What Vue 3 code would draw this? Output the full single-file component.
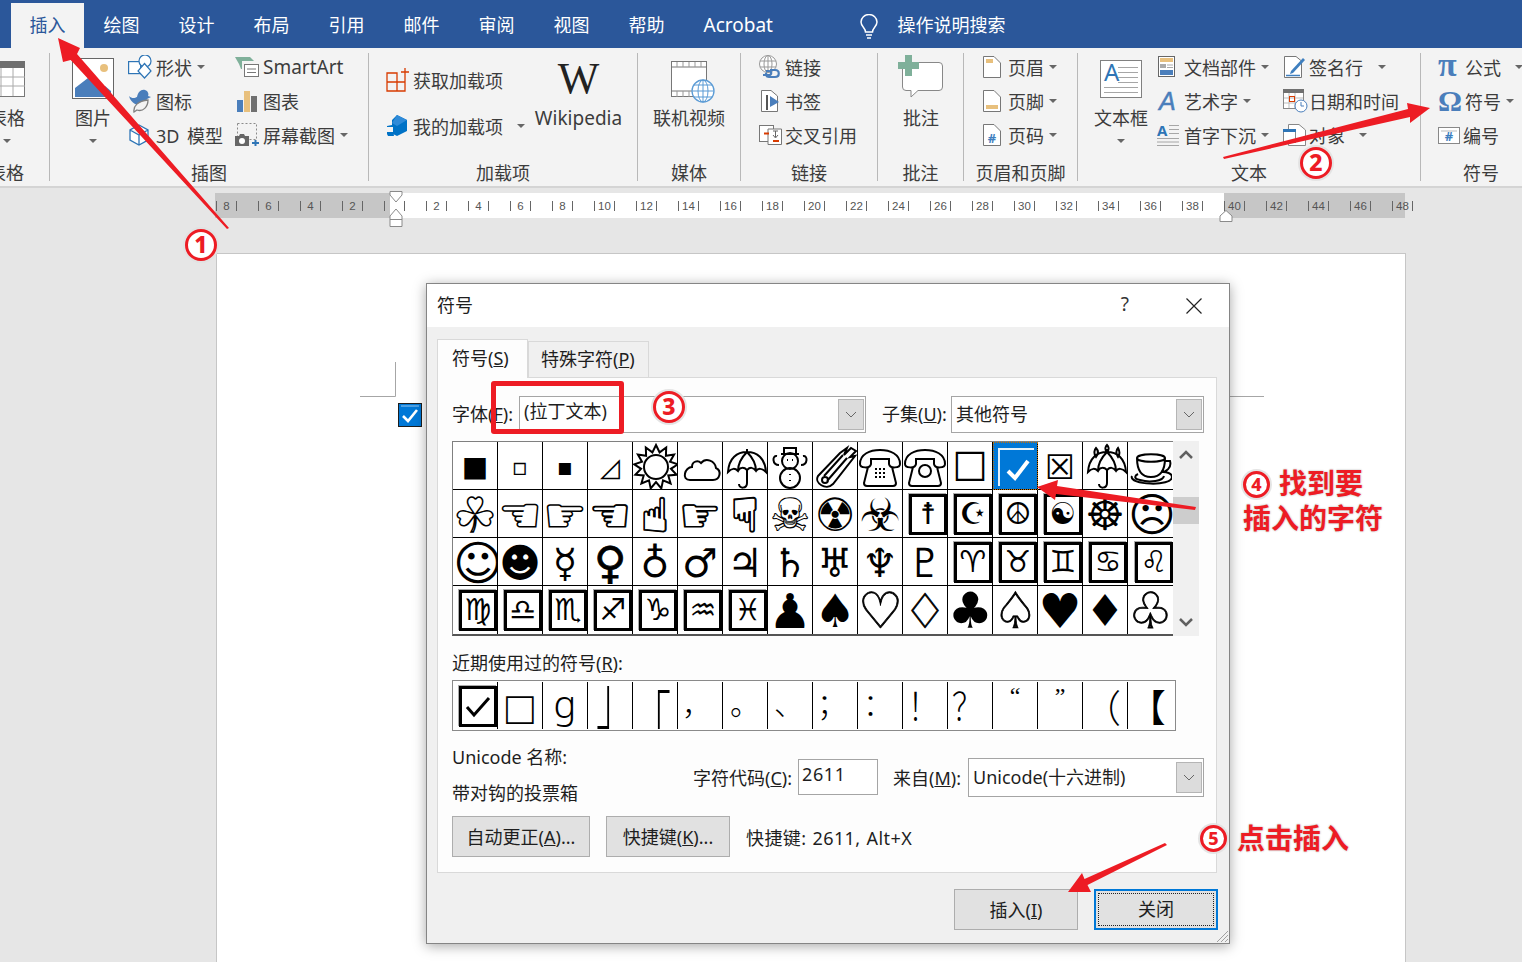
<script setup>
const tabs = ['绘图', '设计', '布局', '引用', '邮件', '审阅', '视图', '帮助', 'Acrobat']

const rulerLabels = ['8', '6', '4', '2', '']
for (let n = 2; n <= 48; n += 2) rulerLabels.push(String(n))

const circle = (cx, cy, r) => `M${cx - r} ${cy} a${r} ${r} 0 1 0 ${r * 2} 0 a${r} ${r} 0 1 0 ${-r * 2} 0 Z `

function star(cx, cy, outer, inner, n) {
  let d = ''
  for (let i = 0; i < n * 2; i++) {
    const r = i % 2 ? inner : outer
    const a = (Math.PI * i) / n
    d += `${i ? 'L' : 'M'}${(cx + r * Math.sin(a)).toFixed(1)} ${(cy - r * Math.cos(a)).toFixed(1)} `
  }
  return d + 'Z '
}

const umbrellaTop = 'M5 29 C6 15 14 9 24 9 C34 9 42 15 43 29 C39 25 35 25 33 28 C30 24 27 24 24 27 C21 24 17 24 15 28 C12 25 9 25 5 29 Z M24 6 V9 M24 27 V40 C24 46 16 46 16 41 M24 9 C18 15 15 21 15 28 M24 9 C30 15 33 21 33 28 '
const handset = 'M2 21 C2 11 12 7 22 7 C32 7 42 11 42 21 C42 25 32 26 31 21 V16 H13 V21 C12 26 2 25 2 21 Z M10 24 L6 40 Q6 43 9 43 H35 Q38 43 38 40 L34 24 '

// pictographs that the fallback font draws too differently from the reference
const pictos = {
  '☼': star(23, 24, 22, 15, 13) + circle(23, 24, 12),
  '☁': 'M12 37 H35 C42 37 44 28 38 25 C37 18 28 14 23 20 C20 17 14 18 14 24 C7 24 3 37 12 37 Z',
  '☂': umbrellaTop,
  '☃': circle(22, 35, 10) + circle(22, 18, 8) + 'M13 11 H31 M16 11 V5 H28 V11 M9 13 C4 12 4 22 11 22 M35 13 C40 12 40 22 33 22 M19 17 H20 M24 17 H25 M22 31 V32 M22 37 V38',
  '☄': 'M5 33 L27 10 L34 5 L31 12 L38 5 L43 8 L37 14 L42 13 L20 41 C13 48 1 40 5 33 Z M11 33 L30 12 M14 38 L34 15 ' + circle(12, 37, 3),
  '☎': handset + 'M17 26 H19 M21 26 H23 M25 26 H27 M17 30 H19 M21 30 H23 M25 30 H27 M17 34 H19 M21 34 H23 M25 34 H27',
  '☏': handset + circle(22, 28, 6),
  '☔': umbrellaTop + 'M13 14 C10 10 12 6 13 5 C15 7 16 10 13 14 Z M24 9 C21 6 23 3 24 2 C25 3 27 6 24 9 Z M35 14 C32 10 34 6 35 5 C36 7 38 10 35 14 Z',
  '☕': 'M9 15 C9 10 37 10 37 15 C37 20 9 20 9 15 Z M9 15 C9 28 14 34 23 34 C32 34 37 28 37 15 M37 18 H42 C44 25 38 29 33 29 M4 33 C0 42 44 44 44 34 C44 30 38 29 35 29 M10 31 C6 33 6 36 12 37 C22 40 35 38 36 33',
}

const boxed = new Set('☨☪☮☯♈♉♊♋♌♍♎♏♐♑♒♓')
const symbols = [...'■▫▪◿☼☁☂☃☄☎☏☐☑☒☔☕☘☚☛☜☝☞☟☠☢☣☨☪☮☯☸☹☺☻☿♀♁♂♃♄♅♆♇♈♉♊♋♌♍♎♏♐♑♒♓♟♠♡♢♣♤♥♦♧']
const sizeClass = {
  '■': 's28', '▫': 's24', '▪': 's24', '◿': 's26', '☒': 's34',
  '☘': 's48 line', '☚': 's48 line', '☛': 's48 line', '☜': 's48 thick', '☝': 's48 thick', '☞': 's48 thick', '☟': 's48 thick',
  '☠': 's46', '☢': 's46', '☣': 's46', '☸': 's44', '☹': 's46', '☺': 's48',
  '♀': 's44 thick', '♟': 's48', '♠': 's46', '♡': 's50 thick', '♢': 's48 thick', '♣': 's50',
  '♤': 's50 thick', '♥': 's48', '♦': 's44', '♧': 's50 thick',
}

const recent = [
  ['□', 'square'], ['g', 'latin'], ['」', 'tall left'], ['「', 'tall right'],
  ['，', 'punct p4'], ['。', 'punct p7'], ['、', 'punct p6'], ['；', 'punct p4'], ['：', 'punct p5'],
  ['！', 'punct p5 tall-p'], ['？', 'punct p4 tall-p'], ['“', 'quote'], ['”', 'quote'], ['（', ''], ['【', ''],
]
</script>

<template>
  <div class="app">
    <div class="tabbar">
      <div class="tab active">插入</div>
      <div v-for="t in tabs" :key="t" class="tab" :class="{ wide: t === 'Acrobat' }">{{ t }}</div>
      <svg class="bulb" width="20" height="26" viewBox="0 0 20 26" fill="none" stroke="#fff" stroke-width="1.5">
        <path d="M6.5 18 C6.5 14 2 12.5 2 8 A8 7.500 0 0 1 18 8 C18 12.500 13.500 14 13.500 18 Z" />
        <path d="M7 21 H13 M8 24 H12" />
      </svg>
      <div class="search">操作说明搜索</div>
    </div>

    <div class="ribbon">
      <section class="group g1">
        <div class="body">
          <div class="big table-btn">
            <div class="art">
              <svg width="36" height="54" viewBox="0 0 36 54">
                <rect x="0.500" y="11.500" width="35" height="35" fill="#fff" stroke="#777" />
                <rect x="0" y="11" width="36" height="7" fill="#6e6e6e" />
                <path d="M12 18 V46 M24 18 V46 M0 27 H36 M0 36 H36" stroke="#aaa" />
              </svg>
            </div>
            <span>表格</span>
            <i class="caret drop"></i>
          </div>
        </div>
        <div class="label table-label">表格</div>
      </section>

      <section class="group g2">
        <div class="body">
          <div class="big pic-btn">
            <div class="art">
              <svg width="42" height="54" viewBox="0 0 42 54">
                <rect x="0.500" y="8.500" width="41" height="40" fill="#fff" stroke="#666" />
                <circle cx="32" cy="18" r="4" fill="#e8c07d" />
                <path d="M3 47 V38 L16 28 L29 38 L33 36 L39 41 V47 Z" fill="#4a7ebb" />
              </svg>
            </div>
            <span>图片</span>
            <i class="caret drop"></i>
          </div>
          <div class="rows col-shape">
            <div class="row">
              <svg class="ico" width="24" height="24" viewBox="0 0 24 24" fill="#fff" stroke="#2e75b6" stroke-width="1.200">
                <rect x="0.600" y="6.600" width="12" height="12" />
                <circle cx="17" cy="6" r="6" />
                <path d="M16.500 8.500 L23 16 L16.500 23 L10 16 Z" />
              </svg>
              <span class="txt">形状</span><i class="caret"></i>
            </div>
            <div class="row">
              <svg class="ico" width="24" height="24" viewBox="0 0 24 24">
                <path d="M1 7 C4 10 7 9 9 8 C10 3 13 0 17 1 C20 2 21 5 20 7 L23 8 L19 10 C17 16 11 17 7 15 C4 13 2 11 1 7 Z" fill="#4a7ebb" />
                <path d="M6 23 C5 17 10 12 20 11 C20 18 15 23 9 21 Z" fill="#f3f3f3" stroke="#808080" stroke-width="1.300" />
              </svg>
              <span class="txt">图标</span>
            </div>
            <div class="row">
              <svg class="ico" width="24" height="24" viewBox="0 0 24 24" fill="#fff" stroke="#2e75b6" stroke-width="1.300">
                <path d="M11 2 L20 7 V17 L11 22 L2 17 V7 Z M2 7 L11 12 L20 7 M11 12 V22" />
              </svg>
              <span class="txt spaced">3D 模型</span>
            </div>
          </div>
          <div class="rows">
            <div class="row">
              <svg class="ico ico-28" width="24" height="24" viewBox="0 0 24 24">
                <path d="M0 2 H15 L19 6 H7 V14 H6 L4 9 Z" fill="#7fb09a" />
                <rect x="9.500" y="9.500" width="14" height="12" fill="#fff" stroke="#777" />
                <path d="M12 14 H21 M12 17.500 H21" stroke="#777" />
              </svg>
              <span class="txt wide">SmartArt</span>
            </div>
            <div class="row">
              <svg class="ico ico-28" width="24" height="24" viewBox="0 0 24 24">
                <rect x="2" y="11" width="6" height="12" fill="#4a7ebb" />
                <rect x="9" y="2" width="6" height="21" fill="#e8c07d" />
                <rect x="16" y="7" width="6" height="16" fill="#707070" />
              </svg>
              <span class="txt">图表</span>
            </div>
            <div class="row">
              <svg class="ico ico-28" width="24" height="24" viewBox="0 0 24 24">
                <rect x="2.500" y="0.500" width="19" height="16" fill="none" stroke="#8a8a8a" stroke-dasharray="2 2" />
                <path d="M0 13 H4 L5 11 H9 L10 13 H14 V23 H0 Z" fill="#666" />
                <circle cx="7" cy="18" r="3" fill="#fff" />
                <path d="M17 20 H24 M20.500 17 V23" stroke="#2e75b6" stroke-width="2" />
              </svg>
              <span class="txt">屏幕截图</span><i class="caret"></i>
            </div>
          </div>
        </div>
        <div class="label">插图</div>
      </section>

      <section class="group g3">
        <div class="body">
          <div class="addins">
            <div class="row row-tall">
              <svg class="ico" width="24" height="24" viewBox="0 0 24 24" fill="none" stroke="#d83b01" stroke-width="1.300">
                <path d="M1 5 H11 V23 H1 Z M1 14 H19 V23 H11 M19 14 V8 M15 4 H23 M19 0 V8" />
              </svg>
              <span class="txt">获取加载项</span>
            </div>
            <div class="row row-tall">
              <svg class="ico" width="24" height="24" viewBox="0 0 24 24">
                <path d="M11 1 L21 6 V17 L11 22 L7 20 V13 H1 V18 H7 L8 22 H2 L1 20 V12 L6 11 V6 Z" fill="#0072c6" />
                <path d="M6 9 L11 12 L21 6 L11 1 Z" fill="#2e8ad8" />
              </svg>
              <span class="txt">我的加载项</span><i class="caret caret-far"></i>
            </div>
          </div>
          <div class="big wiki-btn">
            <div class="art"><span class="wiki-w">W</span></div>
            <span class="wide">Wikipedia</span>
          </div>
        </div>
        <div class="label">加载项</div>
      </section>

      <section class="group g4">
        <div class="body">
          <div class="big media-btn">
            <div class="art">
              <svg width="72" height="54" viewBox="0 0 72 54">
                <rect x="18.500" y="11.500" width="35" height="35" fill="#fff" stroke="#777" />
                <path d="M18 17 H54 M18 41 H40" stroke="#777" />
                <path d="M24 12 V17 M30 12 V17 M36 12 V17 M42 12 V17 M48 12 V17 M24 41 V47 M30 41 V47 M36 41 V47" stroke="#999" />
                <circle cx="50" cy="41" r="11" fill="#fff" stroke="#5b9bd5" stroke-width="1.300" />
                <ellipse cx="50" cy="41" rx="5" ry="11" fill="none" stroke="#5b9bd5" />
                <path d="M39 41 H61 M41 35 H59 M41 47 H59 M50 30 V52" stroke="#5b9bd5" />
              </svg>
            </div>
            <span>联机视频</span>
          </div>
        </div>
        <div class="label">媒体</div>
      </section>

      <section class="group g5">
        <div class="body">
          <div class="rows col-links">
            <div class="row">
              <svg class="ico" width="24" height="24" viewBox="0 0 24 24" fill="none">
                <circle cx="10" cy="9" r="8.500" stroke="#999" fill="#fff" />
                <ellipse cx="10" cy="9" rx="4" ry="8.500" stroke="#999" />
                <path d="M2 6 H18 M2 12 H18 M10 1 V17" stroke="#999" />
                <path d="M5 20 H11 C14 20 14 16 11 16 H8 M17 15 H12 M17 15 C22 15 22 22 17 22 H11 C8 22 7 19 9 18" stroke="#4a7ebb" stroke-width="2.200" />
              </svg>
              <span class="txt">链接</span>
            </div>
            <div class="row">
              <svg class="ico" width="24" height="24" viewBox="0 0 24 24" fill="#fff">
                <path d="M3.500 1.500 H13 L19.500 7 V22.500 H3.500 Z" stroke="#777" />
                <path d="M9 6 V21" stroke="#555" stroke-width="2" />
                <path d="M12 7 L21 13 L12 18 Z" fill="#4a7ebb" />
              </svg>
              <span class="txt">书签</span>
            </div>
            <div class="row">
              <svg class="ico" width="24" height="24" viewBox="0 0 24 24" fill="#fff" stroke="#777">
                <rect x="1.500" y="2.500" width="14" height="16" />
                <path d="M10 6 H23.500 V21.500 H10 Z" />
                <path d="M6 10.500 H11" stroke="#d83b01" stroke-width="2" />
                <path d="M15 8 H20 M17.500 8 V14 M15 12 L17.500 15 L20 12" stroke="#666" fill="none" />
                <path d="M15 18 H21" stroke="#d83b01" stroke-width="2" />
              </svg>
              <span class="txt">交叉引用</span>
            </div>
          </div>
        </div>
        <div class="label">链接</div>
      </section>

      <section class="group g6">
        <div class="body">
          <div class="big note-btn">
            <div class="art">
              <svg width="46" height="54" viewBox="0 0 46 54">
                <path d="M8 12.500 H41 Q44.500 12.500 44.500 16 V37 Q44.500 40.500 41 40.500 H20 L13 47 V40.500 H8 Q4.500 40.500 4.500 37 V16 Q4.500 12.500 8 12.500 Z" fill="#fff" stroke="#888" />
                <path d="M7 5 H14 V12 H21 V19 H14 V26 H7 V19 H0 V12 H7 Z" fill="#7fb09a" />
              </svg>
            </div>
            <span>批注</span>
          </div>
        </div>
        <div class="label">批注</div>
      </section>

      <section class="group g7">
        <div class="body">
          <div class="rows col-page">
            <div class="row">
              <svg class="ico" width="18" height="24" viewBox="0 0 18 24" fill="#fff">
                <path d="M0.500 1.500 H11 L17.500 8 V22.500 H0.500 Z" stroke="#777" />
                <rect x="3" y="4" width="7" height="4" fill="#e8c07d" />
              </svg>
              <span class="txt">页眉</span><i class="caret"></i>
            </div>
            <div class="row">
              <svg class="ico" width="18" height="24" viewBox="0 0 18 24" fill="#fff">
                <path d="M0.500 1.500 H11 L17.500 8 V22.500 H0.500 Z" stroke="#777" />
                <rect x="3" y="16" width="12" height="4" fill="#e8c07d" />
              </svg>
              <span class="txt">页脚</span><i class="caret"></i>
            </div>
            <div class="row">
              <svg class="ico" width="18" height="24" viewBox="0 0 18 24" fill="#fff">
                <path d="M0.500 1.500 H11 L17.500 8 V22.500 H0.500 Z" stroke="#777" />
                <text x="9" y="20" text-anchor="middle" class="svg-num">#</text>
              </svg>
              <span class="txt">页码</span><i class="caret"></i>
            </div>
          </div>
        </div>
        <div class="label">页眉和页脚</div>
      </section>

      <section class="group g8">
        <div class="body">
          <div class="big box-btn">
            <div class="art">
              <svg width="54" height="54" viewBox="0 0 54 54">
                <rect x="6.500" y="10.500" width="41" height="37" fill="#fff" stroke="#808080" />
                <text x="10" y="31" class="svg-a">A</text>
                <path d="M24 17.500 H44 M24 22.500 H44 M24 27.500 H44 M24 32.500 H44 M10 37.500 H44 M10 42.500 H44" stroke="#a6a6a6" />
              </svg>
            </div>
            <span>文本框</span>
            <i class="caret drop"></i>
          </div>
          <div class="rows col-parts">
            <div class="row">
              <svg class="ico" width="21" height="24" viewBox="0 0 21 24" fill="#fff">
                <rect x="1.500" y="1.500" width="16" height="20" stroke="#666" />
                <rect x="3" y="3" width="13" height="4" fill="#e8c07d" />
                <rect x="3" y="9" width="6" height="4" fill="#aaa" />
                <path d="M10 10 H16 M10 12.500 H16" stroke="#aaa" />
                <rect x="3" y="15" width="13" height="5" fill="#4a7ebb" />
              </svg>
              <span class="txt">文档部件</span><i class="caret"></i>
            </div>
            <div class="row">
              <svg class="ico" width="21" height="24" viewBox="0 0 21 24">
                <text x="2" y="21" class="svg-art">A</text>
              </svg>
              <span class="txt">艺术字</span><i class="caret"></i>
            </div>
            <div class="row">
              <svg class="ico drop-ico" width="23" height="24" viewBox="0 0 23 24">
                <text x="0" y="13" class="svg-drop">A</text>
                <path d="M12 2.500 H22 M12 6.500 H22 M12 10.500 H22 M0 15.500 H22 M0 19 H22 M0 22.500 H22" stroke="#a6a6a6" />
              </svg>
              <span class="txt">首字下沉</span><i class="caret"></i>
            </div>
          </div>
          <div class="rows">
            <div class="row">
              <svg class="ico" width="23" height="24" viewBox="0 0 23 24" fill="#fff">
                <path d="M1.500 1.500 H13 L18.500 6 V22.500 H1.500 Z" stroke="#777" />
                <path d="M8 16 L20 3 L22 5 L10 18 L7 19 Z" fill="#3f7fbf" />
                <path d="M3 20.500 H17" stroke="#3f7fbf" stroke-width="1.500" />
              </svg>
              <span class="txt">签名行</span><i class="caret caret-sign"></i>
            </div>
            <div class="row">
              <svg class="ico" width="25" height="24" viewBox="0 0 25 24" fill="#fff">
                <rect x="0.500" y="1.500" width="20" height="18" stroke="#888" />
                <rect x="0" y="0" width="21" height="4" fill="#707070" />
                <path d="M6 4 V19 M12 4 V19 M1 9 H20 M1 14 H20" stroke="#bbb" />
                <rect x="6.500" y="7.500" width="5" height="5" stroke="#d83b01" fill="none" />
                <circle cx="18" cy="17" r="6" stroke="#4a7ebb" />
                <path d="M18 13 V17 H21" stroke="#4a7ebb" fill="none" />
              </svg>
              <span class="txt txt-date">日期和时间</span>
            </div>
            <div class="row">
              <svg class="ico" width="23" height="24" viewBox="0 0 23 24" fill="#fff">
                <path d="M5.500 1.500 H16 L22.500 7 V22.500 H5.500 Z" stroke="#888" />
                <rect x="0.500" y="6.500" width="12" height="13" stroke="#888" />
                <rect x="0" y="6" width="13" height="3" fill="#2e75b6" />
              </svg>
              <span class="txt">对象</span><i class="caret caret-obj"></i>
            </div>
          </div>
        </div>
        <div class="label">文本</div>
      </section>

      <section class="group g9">
        <div class="body">
          <div class="rows col-sym">
            <div class="row">
              <span class="sym-ico pi">π</span>
              <span class="txt">公式</span><i class="caret caret-obj"></i>
            </div>
            <div class="row">
              <span class="sym-ico omega">Ω</span>
              <span class="txt">符号</span><i class="caret"></i>
            </div>
            <div class="row">
              <svg class="ico" width="22" height="24" viewBox="0 0 22 24" fill="#fff">
                <rect x="0.500" y="4.500" width="21" height="16" stroke="#888" />
                <path d="M3 8 H19" stroke="#bbb" />
                <text x="11" y="18" text-anchor="middle" class="svg-num">#</text>
              </svg>
              <span class="txt">编号</span>
            </div>
          </div>
        </div>
        <div class="label sym-label">符号</div>
      </section>
    </div>

    <main class="workspace">
      <div class="ruler">
        <div v-for="(r, i) in rulerLabels" :key="i" class="rcell"><span>{{ r }}</span></div>
        <svg class="indent indent-left" width="14" height="36" viewBox="0 0 14 36" fill="#fff" stroke="#8a8a8a">
          <path d="M1 0.500 H13 V4 L7 11 L1 4 Z" />
          <path d="M7 18 L13 25 V35.500 H1 V25 Z M1 28.500 H13" />
        </svg>
        <svg class="indent indent-right" width="14" height="12" viewBox="0 0 14 12" fill="#fff" stroke="#8a8a8a">
          <path d="M7 0.500 L13 6 V11.500 H1 V6 Z" />
        </svg>
      </div>
      <div class="page">
        <div class="page-marks">
          <svg width="36" height="35" viewBox="0 0 36 35" fill="none" stroke="#a6a6a6"><path d="M35.500 0 V34.500 H0" /></svg>
          <svg class="picked" width="24" height="24" viewBox="0 0 24 24">
            <rect x="0.500" y="0.500" width="23" height="23" fill="#0078d7" stroke="#1d1d1d" />
            <path d="M3 3 H21" stroke="#fff" opacity=".6" />
            <path d="M5 13 L10 18 L19 7" fill="none" stroke="#fff" stroke-width="2.600" />
          </svg>
          <svg class="mark-right" width="41" height="35" viewBox="0 0 41 35" fill="none" stroke="#a6a6a6"><path d="M41 34.500 H0" /></svg>
        </div>
      </div>
    </main>

    <div class="dialog">
      <header class="dlg-title">
        <span class="dlg-name">符号</span>
        <span class="help">?</span>
        <svg width="16" height="16" viewBox="0 0 16 16" stroke="#222" stroke-width="1.200"><path d="M0.500 0.500 L15.500 15.500 M15.500 0.500 L0.500 15.500" /></svg>
      </header>
      <div class="dlg-body">
        <div class="dtabs">
          <div class="dtab on">符号(<u>S</u>)</div>
          <div class="dtab">特殊字符(<u>P</u>)</div>
        </div>
        <div class="panel">
          <div class="pick-row">
            <label class="l-font">字体(<u>F</u>):</label>
            <div class="select s-font"><span>(拉丁文本)</span><b class="chev"><svg width="12" height="7" viewBox="0 0 12 7" fill="none" stroke="#666"><path d="M1 1 L6 6 L11 1" /></svg></b></div>
            <label class="l-sub">子集(<u>U</u>):</label>
            <div class="select s-sub"><span>其他符号</span><b class="chev"><svg width="12" height="7" viewBox="0 0 12 7" fill="none" stroke="#666"><path d="M1 1 L6 6 L11 1" /></svg></b></div>
          </div>

          <div class="map-wrap">
            <div class="charmap">
              <div v-for="(s, i) in symbols" :key="i" class="cell" :class="[{ sel: i === 12 }, sizeClass[s]]">
                <svg v-if="i === 12" width="39" height="41" viewBox="0 0 39 41">
                  <path d="M2 39 V2 H37" fill="none" stroke="#fff" stroke-width="2" opacity=".9" />
                  <path d="M11 24 L18 31 L31 14" fill="none" stroke="#fff" stroke-width="4" />
                </svg>
                <svg v-else-if="pictos[s]" class="picto" width="44" height="47" viewBox="0 0 44 47" fill="none" stroke="#000" stroke-width="2">
                  <path :d="pictos[s]" />
                </svg>
                <span v-else-if="boxed.has(s)" class="box">{{ s }}</span>
                <template v-else>{{ s }}</template>
              </div>
            </div>
            <div class="vbar">
              <svg width="14" height="9" viewBox="0 0 14 9" fill="none" stroke="#606060" stroke-width="2.500"><path d="M1 8 L7 2 L13 8" /></svg>
              <div class="thumb"></div>
              <svg width="14" height="9" viewBox="0 0 14 9" fill="none" stroke="#606060" stroke-width="2.500"><path d="M1 1 L7 7 L13 1" /></svg>
            </div>
          </div>

          <div class="recent-label">近期使用过的符号(<u>R</u>):</div>
          <div class="recent">
            <div class="rc">
              <span class="box box-check"><svg width="26" height="22" viewBox="0 0 26 22" fill="none" stroke="#000" stroke-width="3"><path d="M2 11 L9 19 L24 2" /></svg></span>
            </div>
            <div v-for="(r, i) in recent" :key="i" class="rc" :class="r[1]"><span class="rc-g">{{ r[0] }}</span></div>
          </div>

          <div class="info">
            <div class="info-left">
              <div>Unicode 名称:</div>
              <div>带对钩的投票箱</div>
            </div>
            <div class="info-right">
              <label class="l-code">字符代码(<u>C</u>):</label>
              <div class="input">2611</div>
              <label class="l-from">来自(<u>M</u>):</label>
              <div class="select s-from"><span>Unicode(十六进制)</span><b class="chev"><svg width="12" height="7" viewBox="0 0 12 7" fill="none" stroke="#666"><path d="M1 1 L6 6 L11 1" /></svg></b></div>
            </div>
          </div>

          <div class="keys">
            <button class="btn b-auto">自动更正(<u>A</u>)...</button>
            <button class="btn b-key">快捷键(<u>K</u>)...</button>
            <span class="shortcut">快捷键: 2611, Alt+X</span>
          </div>
        </div>
        <div class="foot">
          <button class="btn b-foot">插入(<u>I</u>)</button>
          <button class="btn b-foot b-close"><span>关闭</span></button>
        </div>
      </div>
      <svg class="grip" width="14" height="14" viewBox="0 0 14 14" stroke="#a0a0a0"><path d="M13 2 L2 13 M13 6 L6 13 M13 10 L10 13" /></svg>
    </div>

    <svg class="arrows" width="1522" height="962" viewBox="0 0 1522 962" fill="#ed1c24">
      <polygon points="58,38 80,48 77,54 229,228 227,229 70.700,60 63,62" />
      <polygon points="1430,108 1407,103 1408,109 1223,157 1224,159 1410,117 1410,123" />
      <polygon points="1037,487 1058,480 1057,486 1196,507 1195,510 1056,494 1055,500" />
      <polygon points="1068,892 1082,873 1084.500,879 1165,843 1167,845 1087.500,885 1091,892" />
    </svg>
    <div class="redbox"></div>
    <div class="num n1">1</div>
    <div class="num n2">2</div>
    <div class="num n3">3</div>
    <div class="num small n4">4</div>
    <div class="num small n5">5</div>
    <div class="note note4">找到要</div>
    <div class="note note4b">插入的字符</div>
    <div class="note note5">点击插入</div>
  </div>
</template>

<style>
html, body { margin: 0; background: #e6e6e6; overflow: hidden; }
</style>

<style scoped>
.app {
  position: relative;
  width: 1522px;
  height: 962px;
  overflow: hidden;
  background: #e6e6e6;
  font-family: "Noto Sans", "Noto Sans CJK SC", sans-serif;
  font-size: 18px;
  color: #3c3c3c;
}
.wide { font-size: 19px; }

/* tabs */
.tabbar {
  height: 48px;
  box-sizing: border-box;
  padding-left: 11px;
  background: #2b579a;
  display: flex;
  align-items: flex-end;
  color: #fff;
}
.tab {
  height: 45px;
  line-height: 45px;
  padding: 0 19.5px;
  white-space: nowrap;
}
.tab.active {
  padding: 0 18.5px;
  background: #f3f3f3;
  color: #2b579a;
}
.bulb { margin: 0 18px 8px 67px; flex: none; }
.search { height: 45px; line-height: 45px; }

/* ribbon */
.ribbon {
  height: 140px;
  box-sizing: border-box;
  background: #f3f3f3;
  border-bottom: 2px solid #d4d4d4;
  display: flex;
}
.group {
  box-sizing: border-box;
  height: 128px;
  margin-top: 5px;
  border-right: 1px solid #b8b8b8;
  flex: none;
}
.g1 { width: 50px; overflow: hidden; }
.g2 { width: 319px; }
.g3 { width: 269px; }
.g4 { width: 103px; }
.g5 { width: 137px; }
.g6 { width: 86px; }
.g7 { width: 114px; }
.g8 { width: 343px; }
.g9 { width: 102px; border-right: 0; }
.body {
  height: 111px;
  margin-top: -3px;
  display: flex;
  position: relative;
}
.label {
  height: 24px;
  line-height: 24px;
  text-align: center;
  white-space: nowrap;
}
.table-label { margin-left: -37px; }
.sym-label { padding-left: 18px; }
.big {
  display: flex;
  flex-direction: column;
  align-items: center;
  flex: none;
  white-space: nowrap;
}
.big > span { height: 26px; line-height: 26px; }
.art {
  height: 55px;
  display: flex;
  justify-content: center;
  align-self: center;
}
.caret {
  display: inline-block;
  width: 0;
  height: 0;
  margin-left: 5px;
  border: 4px solid transparent;
  border-top: 4px solid #666;
  border-bottom: 0;
  flex: none;
}
.caret.drop { margin: 8px 0 0; }
.caret-far { margin-left: 14px; }
.caret-sign { margin-left: 15px; }
.caret-obj { margin-left: 14px; }
.rows { display: flex; flex-direction: column; flex: none; }
.row {
  height: 34px;
  display: flex;
  align-items: center;
  white-space: nowrap;
}
.row-tall { height: 46px; }
.ico { flex: none; margin-right: 3px; }
.ico-28 { margin-right: 4px; }
.txt { flex: none; }
.spaced { word-spacing: 3px; }
.table-btn { width: 36px; margin-left: -11px; }
.pic-btn { width: 36px; margin-left: 25px; }
.col-shape { width: 107px; margin-left: 17px; }
.col-shape .ico { margin-right: 4px; }
.addins { width: 139px; margin: 7px 0 0 17px; }
.wiki-btn { width: 87px; margin-left: 10px; }
.wiki-w {
  align-self: flex-end;
  font-family: "Liberation Serif", serif;
  font-size: 44px;
  line-height: 46px;
  color: #222;
  margin-bottom: 3px;
}
.media-btn { width: 72px; margin-left: 15px; }
.col-links { margin-left: 17px; }
.note-btn { width: 36px; margin-left: 25px; }
.col-page { margin-left: 19px; }
.col-page .ico { margin-right: 7px; }
.box-btn { width: 54px; margin-left: 16px; }
.col-parts { width: 126px; margin-left: 9px; }
.col-parts .ico { margin-right: 6px; }
.col-parts .drop-ico { margin-right: 4px; }
.rows .txt-date { margin-left: -2px; }
.col-sym { margin-left: 17px; }
.sym-ico {
  width: 27px;
  flex: none;
  color: #4a7ebb;
  font-family: "Liberation Serif", serif;
  font-weight: 700;
  font-size: 30px;
  line-height: 34px;
}
.sym-ico.pi { font-size: 34px; line-height: 26px; padding-bottom: 4px; }
.svg-num { font: 700 13px "Noto Sans", sans-serif; fill: #3f7fbf; }
.svg-a { font: 400 24px "Noto Sans", sans-serif; fill: #2e75b6; }
.svg-art { font: italic 400 25px "Liberation Sans", sans-serif; fill: #4a7ebb; stroke: #4a7ebb; stroke-width: .5px; }
.svg-drop { font: 700 15px "Noto Sans", sans-serif; fill: #2e75b6; }

/* ruler and page */
.workspace { height: 774px; }
.ruler {
  position: relative;
  width: 1190px;
  height: 25px;
  margin: 5px 0 0 215px;
  padding-left: 1px;
  box-sizing: border-box;
  background: linear-gradient(to right, #c6c6c6 175px, #fff 175px, #fff 1009px, #c6c6c6 1009px);
  display: flex;
  font-family: "Liberation Sans", sans-serif;
  font-size: 11.5px;
  color: #555;
}
.rcell {
  width: 42px;
  flex: none;
  box-sizing: border-box;
}
.rcell span {
  display: block;
  width: 21px;
  height: 10px;
  line-height: 11px;
  margin-top: 8px;
  box-sizing: border-box;
  border-left: 1px solid #666;
  border-right: 1px solid #666;
  text-align: center;
  white-space: nowrap;
}
.rcell:last-child span { border-right: 0; padding-left: 3px; }
.indent { position: absolute; }
.indent-left { left: 174px; top: -2px; }
.indent-right { left: 1004px; top: 17px; }
.page {
  width: 1190px;
  height: 720px;
  box-sizing: border-box;
  margin: 35px 0 0 216px;
  background: #fff;
  border: 1px solid #c6c6c6;
  border-bottom: 0;
  padding: 108px 0 0 143px;
}
.page-marks { display: flex; align-items: flex-start; }
.picked { margin: 41px 0 0 2px; }
.mark-right { margin-left: auto; margin-right: 141px; }

/* dialog */
.dialog {
  position: absolute;
  left: 426px;
  top: 283px;
  width: 804px;
  height: 661px;
  box-sizing: border-box;
  border: 1px solid #858585;
  background: #f0f0f0;
  box-shadow: 0 2px 12px rgba(0, 0, 0, 0.35);
  color: #1e1e1e;
}
.dlg-title {
  height: 43px;
  padding: 0 27px 0 10px;
  background: #fff;
  display: flex;
  align-items: center;
}
.dlg-name { padding-bottom: 4px; }
.help { margin: 0 57px 0 auto; padding-bottom: 3px; font-size: 19px; color: #333; }
.dlg-body { padding: 0 11px 0 10px; }
.dtabs { display: flex; align-items: flex-end; height: 50px; }
.dtab {
  box-sizing: border-box;
  height: 36px;
  line-height: 34px;
  padding: 0 12px;
  border: 1px solid #d9d9d9;
  border-bottom: 0;
  background: #f0f0f0;
  width: 121px;
  white-space: nowrap;
}
.dtab.on {
  width: 91px;
  height: 39px;
  line-height: 37px;
  padding: 0 14px;
  background: #fdfdfd;
  position: relative;
  z-index: 1;
  margin-bottom: -1px;
}
.panel {
  box-sizing: border-box;
  width: 780px;
  height: 496px;
  border: 1px solid #d9d9d9;
  padding: 18px 0 0 14px;
  background: #fdfdfd;
}
.pick-row { display: flex; align-items: center; height: 37px; }
.pick-row label { padding-bottom: 4px; }
label { white-space: nowrap; flex: none; }
.l-font { width: 67px; }
.l-sub { width: 69px; margin-left: 16px; }
.select {
  box-sizing: border-box;
  height: 37px;
  border: 1px solid #a5a5a5;
  background: #fff;
  flex: none;
  display: flex;
  align-items: center;
  justify-content: space-between;
  padding-left: 4px;
  white-space: nowrap;
}
.s-font { width: 347px; }
.s-font span { padding-bottom: 10px; }
.s-sub { width: 253px; }
.s-sub span { padding-bottom: 4px; }
.s-from { width: 236px; height: 39px; }
.s-from span { padding-bottom: 2px; }
.chev {
  width: 26px;
  height: 31px;
  margin-right: 1px;
  background: #dcdcdc;
  border: 1px solid #b5b5b5;
  box-sizing: border-box;
  display: flex;
  align-items: center;
  justify-content: center;
}
.map-wrap { display: flex; margin-top: 8px; height: 195px; }
.charmap {
  width: 721px;
  height: 195px;
  box-sizing: border-box;
  border-top: 1px solid #808080;
  border-left: 1px solid #808080;
  border-bottom: 2px solid #555;
  background: #fff;
  display: grid;
  grid-template-columns: repeat(16, 45px);
  grid-auto-rows: 48px;
  color: #000;
  font-family: "DejaVu Sans", sans-serif;
  font-size: 40px;
  flex: none;
}
.cell {
  box-sizing: border-box;
  border-right: 1px solid #000;
  border-bottom: 1px solid #000;
  line-height: 50px;
  text-align: center;
  overflow: hidden;
  position: relative;
}
.cell:nth-child(16n) { border-right: 0; }
.cell:nth-child(n+49) { border-bottom: 0; }
.s24 { font-size: 24px; }
.s26 { font-size: 26px; }
.s28 { font-size: 28px; }
.s34 { font-size: 34px; }
.s44 { font-size: 44px; }
.s46 { font-size: 46px; }
.s48 { font-size: 48px; }
.s50 { font-size: 50px; }
.line { color: #fff; -webkit-text-stroke: 1.500px #000; }
.thick { -webkit-text-stroke: 0.800px #000; }
.picto { display: block; margin-top: 1px; }
.cell.sel {
  background: #0078d7;
  outline: 1px dotted #c87000;
  outline-offset: -1px;
  padding: 5px 0 0 4px;
  text-align: left;
  line-height: 0;
}
.box {
  position: absolute;
  right: 0;
  top: 4px;
  width: 38px;
  height: 41px;
  box-sizing: border-box;
  border: 3px solid #000;
  box-shadow: -1px -1px 0 #aaa;
  font-size: 30px;
  line-height: 34px;
  text-align: center;
}
.vbar {
  width: 26px;
  background: #f0f0f0;
  display: flex;
  flex-direction: column;
  align-items: center;
  padding: 9px 0;
  box-sizing: border-box;
}
.thumb { width: 26px; height: 27px; margin: 38px 0 auto; background: #cdcdcd; }
.recent-label { height: 26px; line-height: 26px; margin-top: 14px; }
.recent {
  width: 724px;
  height: 51px;
  box-sizing: border-box;
  margin-top: 4px;
  border: 1px solid #8a8a8a;
  background: #fff;
  display: flex;
  align-items: center;
  color: #000;
  font-size: 38px;
  font-family: "Noto Sans CJK SC", sans-serif;
  font-weight: 300;
}
.rc {
  width: 45px;
  height: 47px;
  box-sizing: border-box;
  flex: none;
  border-right: 1px solid #000;
  line-height: 47px;
  position: relative;
  overflow: hidden;
}
.rc:last-child { border-right: 0; }
.rc-g { display: block; }
.rc.latin { font-family: "Noto Sans", sans-serif; text-align: center; line-height: 42px; }
.rc.square { font-family: "DejaVu Sans", sans-serif; font-size: 46px; text-align: center; line-height: 52px; }
.rc.tall .rc-g { transform: scaleY(1.700); }
.rc.tall.left .rc-g { margin: -11px 0 0 8px; }
.rc.tall.right .rc-g { margin: 11px 0 0 0; }
.rc.punct { font-size: 30px; line-height: 40px; }
.rc.tall-p .rc-g { transform: scaleY(1.250); transform-origin: center; line-height: 44px; }
.p4 { padding-left: 4px; }
.p5 { padding-left: 5px; }
.p6 { padding-left: 6px; }
.p7 { padding-left: 7px; }
.rc.quote { font-size: 24px; line-height: 28px; text-align: center; font-family: "Liberation Serif", serif; }
.box-check {
  top: 4px;
  display: flex;
  align-items: center;
  justify-content: center;
}
.info { display: flex; height: 62px; margin-top: 13px; }
.info-left { width: 241px; line-height: 26px; flex: none; }
.info-left div + div { margin-top: 10px; }
.info-right { display: flex; align-items: center; height: 62px; padding-top: 4px; box-sizing: border-box; }
.l-code { width: 100px; margin-right: 5px; }
.input {
  box-sizing: border-box;
  width: 80px;
  height: 36px;
  border: 1px solid #a5a5a5;
  background: #fff;
  padding: 1px 3px;
  line-height: 26px;
  letter-spacing: .6px;
}
.l-from { width: 70px; margin: 0 5px 0 15px; }
.keys { display: flex; align-items: center; margin-top: 10px; }
.btn {
  box-sizing: border-box;
  height: 41px;
  border: 1px solid #adadad;
  background: #e1e1e1;
  color: #1e1e1e;
  font: inherit;
  padding: 0 0 2px;
  white-space: nowrap;
}
.b-auto { width: 138px; }
.b-key { width: 124px; margin-left: 16px; }
.shortcut { margin-left: 16px; white-space: nowrap; word-spacing: 1px; letter-spacing: .4px; }
.foot { display: flex; justify-content: flex-end; gap: 16px; margin-top: 16px; }
.b-foot { width: 124px; }
.b-close { border: 2px solid #0078d7; padding: 2px; }
.b-close span {
  display: block;
  height: 33px;
  line-height: 30px;
  box-sizing: border-box;
  border: 1px dotted #222;
}
.grip { position: absolute; right: 0; bottom: 0; }

/* red annotations */
.arrows { position: absolute; left: 0; top: 0; pointer-events: none; }
.redbox {
  position: absolute;
  left: 491px;
  top: 381px;
  width: 133px;
  height: 53px;
  box-sizing: border-box;
  border: 5px solid #ed1c24;
  border-radius: 3px;
}
.num {
  position: absolute;
  width: 32px;
  height: 32px;
  box-sizing: border-box;
  border: 3px solid #ed1c24;
  border-radius: 50%;
  background: #fff;
  box-shadow: 0 0 0 2px rgba(225, 225, 225, 0.9);
  color: #ed1c24;
  font-weight: 800;
  font-size: 23px;
  line-height: 25px;
  text-align: center;
}
.num.small {
  width: 27px;
  height: 27px;
  font-size: 18px;
  line-height: 20px;
}
.n1 { left: 185px; top: 229px; }
.n2 { left: 1300px; top: 147px; }
.n3 { left: 653px; top: 391px; }
.n4 { left: 1243px; top: 471px; }
.n5 { left: 1200px; top: 825px; }
.note {
  position: absolute;
  color: #ed1c24;
  font-family: "Noto Sans CJK SC", sans-serif;
  font-weight: 700;
  font-size: 28px;
  line-height: 35px;
  white-space: nowrap;
  text-shadow: 0 0 2px #ccc, 0 0 2px #ccc;
}
.note4 { left: 1279px; top: 465px; }
.note4b { left: 1243px; top: 500px; }
.note5 { left: 1237px; top: 820px; }
</style>
